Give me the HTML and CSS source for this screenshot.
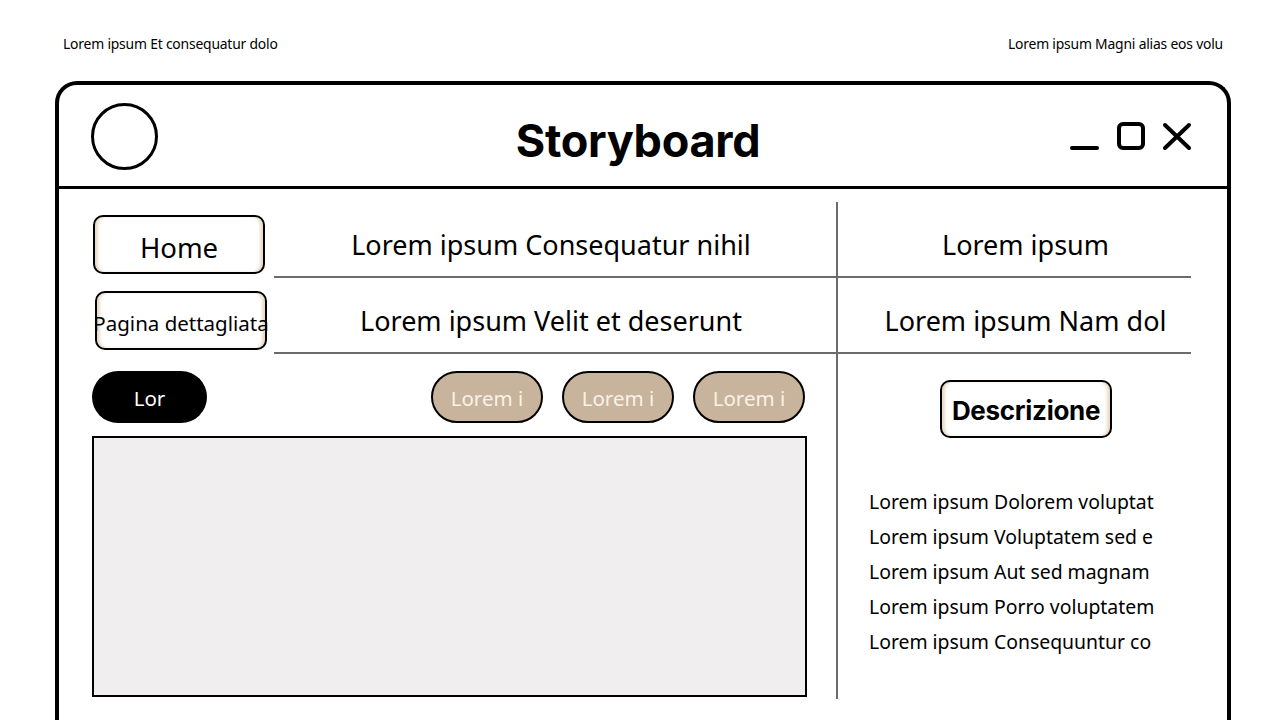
FILE: index.html
```html
<!DOCTYPE html>
<html lang="it">
<head>
<meta charset="utf-8">
<title>Storyboard</title>
<link rel="stylesheet" href="styles.css">
</head>
<body>
<div class="topbar">
  <span>Lorem ipsum Et consequatur dolo</span>
  <span>Lorem ipsum Magni alias eos volu</span>
</div>
<div class="window">
  <div class="win-header">
    <div class="logo-circle"></div>
    <h1 class="title">Storyboard</h1>
    <div class="controls">
      <svg width="124" height="32" viewBox="0 0 124 32" fill="none" stroke="#000" stroke-width="4" stroke-linecap="round" stroke-linejoin="round">
        <line x1="3" y1="27" x2="28" y2="27"/>
        <rect x="50" y="3" width="24" height="24" rx="4"/>
        <line x1="96" y1="4" x2="120" y2="27"/>
        <line x1="120" y1="4" x2="96" y2="27"/>
      </svg>
    </div>
  </div>
  <div class="main">
    <div class="nav-cell nav-cell-1"><button class="nav-btn home-btn">Home</button></div>
    <div class="cell mid">Lorem ipsum Consequatur nihil</div>
    <div class="cell right">Lorem ipsum</div>
    <div class="nav-cell nav-cell-2"><button class="nav-btn detail-btn">Pagina dettagliata</button></div>
    <div class="cell mid">Lorem ipsum Velit et deserunt</div>
    <div class="cell right">Lorem ipsum Nam dol</div>
    <div class="content">
      <div class="pill-row">
        <span class="pill pill-dark">Lor</span>
        <div class="pill-group">
          <span class="pill pill-beige">Lorem i</span>
          <span class="pill pill-beige">Lorem i</span>
          <span class="pill pill-beige">Lorem i</span>
        </div>
      </div>
      <div class="canvas"></div>
    </div>
    <div class="side">
      <button class="nav-btn desc-btn">Descrizione</button>
      <ul class="desc-list">
        <li>Lorem ipsum Dolorem voluptat</li>
        <li>Lorem ipsum Voluptatem sed e</li>
        <li>Lorem ipsum Aut sed magnam</li>
        <li>Lorem ipsum Porro voluptatem</li>
        <li>Lorem ipsum Consequuntur co</li>
      </ul>
    </div>
  </div>
</div>
</body>
</html>
```

FILE: styles.css
```css
* { box-sizing: border-box; }
html, body { margin: 0; padding: 0; }
body {
  width: 1280px;
  height: 720px;
  overflow: hidden;
  background: #fff;
  font-family: "Noto Sans", "Open Sans", sans-serif;
  color: #000;
}
.topbar {
  height: 81px;
  padding: 6px 57px 0 63px;
  display: flex;
  justify-content: space-between;
  align-items: center;
  font-size: 13.9px;
  letter-spacing: -0.2px;
}
.window {
  margin: 0 49px 0 55px;
  height: 639px;
  overflow: hidden;
  border: 4px solid #000;
  border-bottom: none;
  border-radius: 22px 22px 0 0;
}
.win-header {
  height: 104px;
  border-bottom: 3px solid #000;
  display: grid;
  grid-template-columns: 1fr auto 1fr;
  align-items: center;
  padding: 0 34px 0 32px;
}
.logo-circle {
  width: 67px;
  height: 67px;
  border: 3px solid #000;
  border-radius: 50%;
  margin-top: 2px;
}
.title {
  margin: 0;
  font-family: "Inter", sans-serif;
  font-weight: 700;
  font-size: 45px;
  letter-spacing: -0.3px;
  margin-left: -8px;
  margin-top: 10px;
}
.controls {
  justify-self: end;
  display: flex;
  margin-top: 2px;
}
.controls svg { display: block; }
.main {
  margin-top: 13px;
  padding-left: 33px;
  display: grid;
  grid-template-columns: 182px 562px 355px;
  grid-template-rows: 76px 76px 345px;
}
.nav-cell {
  display: flex;
  align-items: flex-start;
}
.nav-cell-1 { padding-top: 13px; padding-left: 1px; }
.nav-cell-2 { padding-top: 13px; padding-left: 3px; }
.nav-btn {
  font-family: "Noto Sans", sans-serif;
  color: #000;
  background: #fff;
  border: 2px solid #000;
  border-radius: 10px;
  box-shadow: inset 4px 0 3px -1px #e9dcc6, inset -4px 0 3px -1px #e9dcc6;
  padding: 0;
  white-space: nowrap;
  display: flex;
  align-items: center;
  justify-content: center;
}
.home-btn {
  width: 172px;
  height: 59px;
  font-size: 27.5px;
  padding-top: 6px;
}
.detail-btn {
  width: 172px;
  height: 59px;
  font-size: 20.5px;
  padding-top: 5px;
}
.cell {
  border-bottom: 2px solid #6b6b6b;
  display: flex;
  align-items: center;
  justify-content: center;
  font-size: 27px;
  padding-top: 10px;
}
.mid { padding-right: 8px; }
.right {
  border-left: 2px solid #6b6b6b;
  padding-left: 22px;
}
.content {
  grid-column: 1 / span 2;
  padding-top: 17px;
  padding-right: 29px;
}
.pill-row {
  display: flex;
  justify-content: space-between;
  align-items: center;
}
.pill-group {
  display: flex;
  gap: 19px;
  padding-right: 2px;
}
.pill {
  height: 52px;
  border-radius: 26px;
  display: flex;
  align-items: center;
  justify-content: center;
  font-size: 20.5px;
  padding-top: 2px;
}
.pill-dark {
  width: 115px;
  background: #000;
  color: #fff;
}
.pill-beige {
  width: 112px;
  background: #c8b49c;
  border: 2px solid #000;
  color: #f8f2ea;
}
.canvas {
  margin-top: 13px;
  width: 715px;
  height: 261px;
  background: #f0eeef;
  border: 2px solid #000;
}
.side {
  border-left: 2px solid #6b6b6b;
  height: 345px;
  padding-top: 26px;
  display: flex;
  flex-direction: column;
  align-items: center;
}
.desc-btn {
  width: 172px;
  height: 58px;
  margin-left: 23px;
  padding-top: 3px;
  font-family: "Inter", sans-serif;
  font-weight: 700;
  font-size: 26px;
  letter-spacing: -0.3px;
}
.desc-list {
  list-style: none;
  margin: 46px 0 0 0;
  padding: 0 0 0 31px;
  align-self: stretch;
  font-size: 19.4px;
}
.desc-list li {
  height: 35px;
  line-height: 35px;
}
```
